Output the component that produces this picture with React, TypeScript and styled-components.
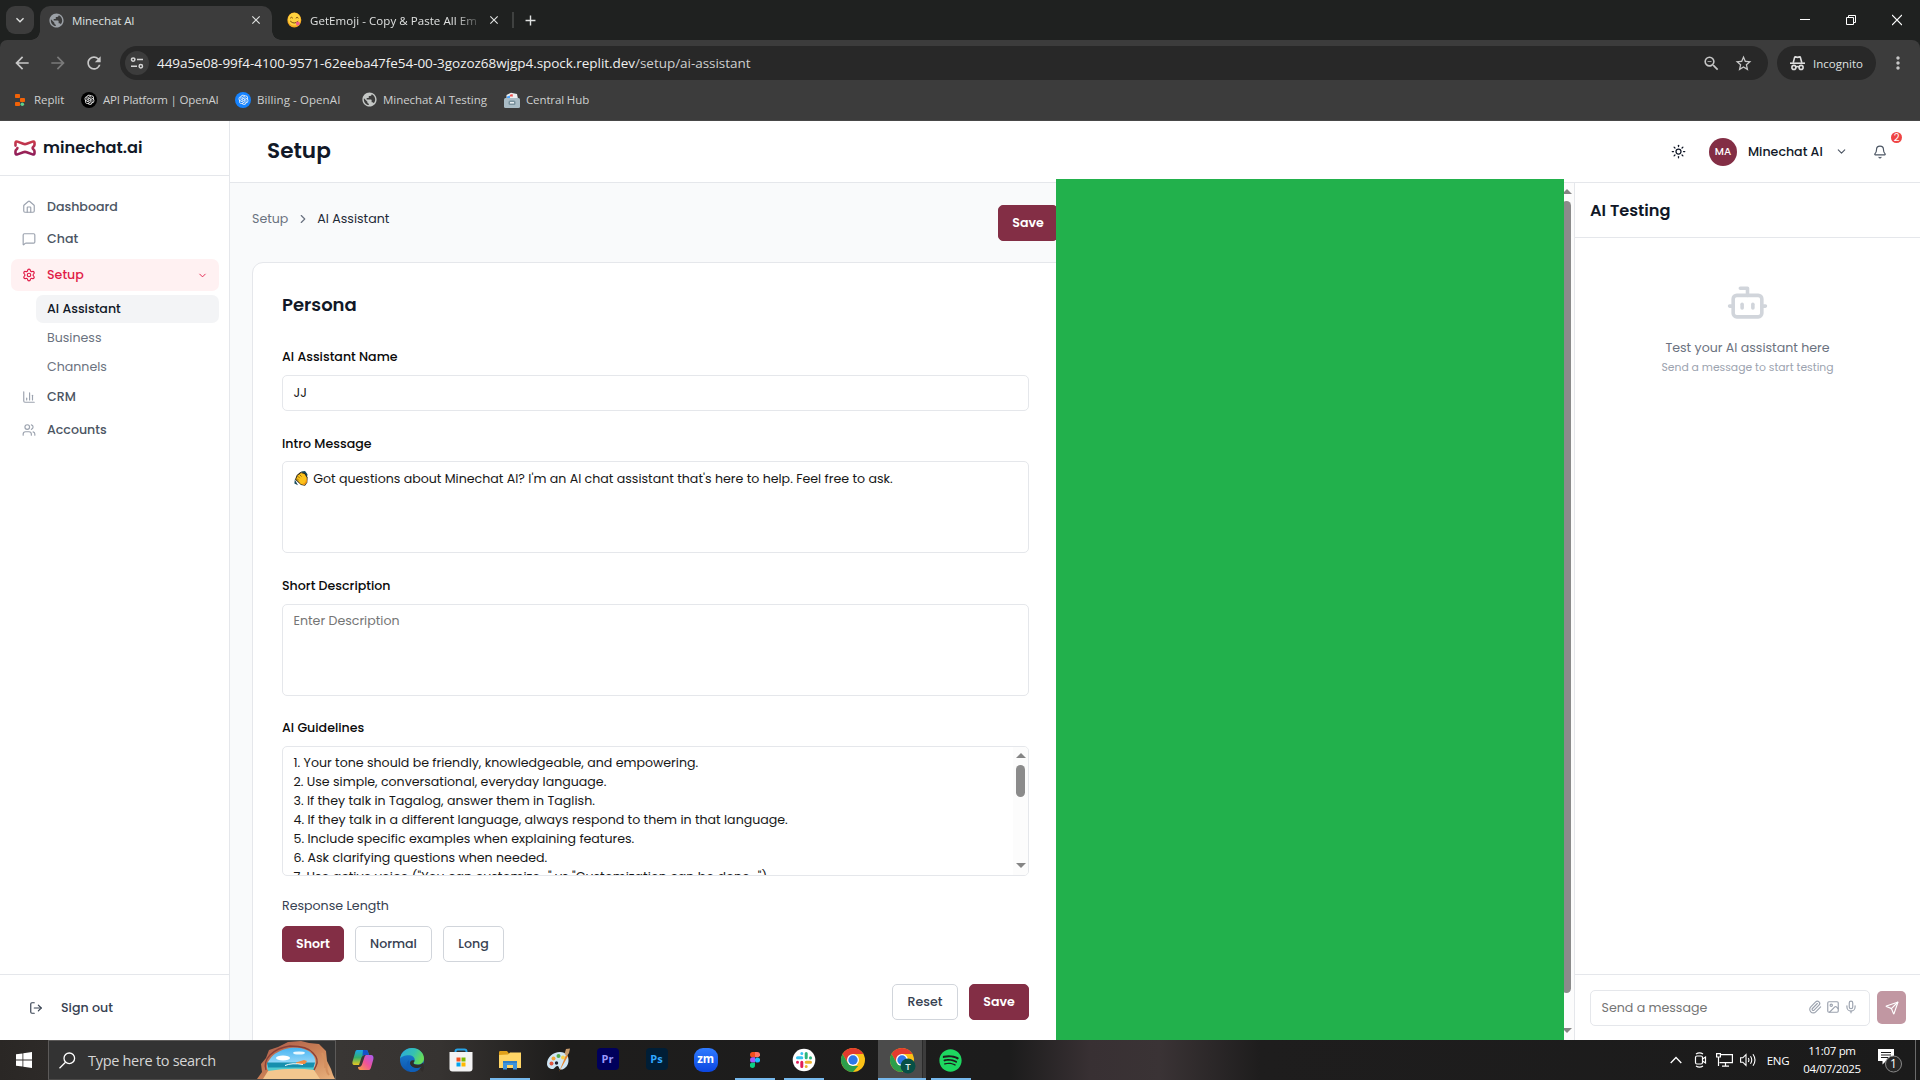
import React from 'react';
import styled, { createGlobalStyle } from 'styled-components';
import {
  Bell, Bot, ChartColumn, ChevronDown, ChevronRight, House, Image as ImageIcon, LogOut,
  MessageSquare, Mic, Paperclip, Send, Settings, Sun, Users,
} from 'lucide-react';
import {
  MdArrowBack, MdArrowForward, MdClose, MdExpandMore, MdMoreVert, MdPublic, MdRefresh,
  MdStarBorder, MdAdd, MdZoomOut,
} from 'react-icons/md';
import { AiOutlineOpenAI } from 'react-icons/ai';
import { FaSpotify } from 'react-icons/fa';

const APP_FONT = 'Poppins, Inter, "Liberation Sans", sans-serif';
const SYSTEM_FONT = '"Segoe UI", "Open Sans", "Noto Sans", sans-serif';
const WINE = '#832e45';
const LINE = '#e5e7eb';

const GlobalStyle = createGlobalStyle`
  *, *::before, *::after { box-sizing: border-box; }
  html, body { margin: 0; padding: 0; background: #1c1c1c; overflow: hidden; }
  svg { display: block; flex: none; }
  button { font: inherit; margin: 0; padding: 0; cursor: pointer; }
`;

const Screen = styled.div`
  width: 1920px;
  height: 1080px;
  display: flex;
  flex-direction: column;
  overflow: hidden;
`;

const Text = styled.span<{ $ls?: number }>`
  letter-spacing: ${(p) => p.$ls ?? 0}px;
  white-space: nowrap;
`;

/* ---------- browser chrome ---------- */

const Browser = styled.header`
  flex: none;
  height: 121px;
  background: #1f2120;
  font-family: ${SYSTEM_FONT};
  font-size: 11.5px;
  color: #dfe1e0;
  display: flex;
  flex-direction: column;
`;

const TabStrip = styled.div`
  height: 40px;
  display: flex;
  align-items: flex-start;
  padding: 6px 0 0 6px;
`;

const TabSearch = styled.div`
  width: 28px;
  height: 28px;
  border-radius: 9px;
  background: #3c3c3c;
  display: grid;
  place-items: center;
  margin-right: 6px;
`;

const Tab = styled.div<{ $active?: boolean; $width: number }>`
  position: relative;
  width: ${(p) => p.$width}px;
  height: ${(p) => (p.$active ? 34 : 28)}px;
  padding: ${(p) => (p.$active ? '0 9px 6px 8px' : '0 3px 0 15px')};
  display: flex;
  align-items: center;
  gap: ${(p) => (p.$active ? 7 : 8)}px;
  border-radius: 10px 10px 0 0;
  background: ${(p) => (p.$active ? '#3c3c3c' : 'transparent')};

  &::before, &::after {
    content: '';
    display: ${(p) => (p.$active ? 'block' : 'none')};
    position: absolute;
    bottom: 0;
    width: 9px;
    height: 9px;
  }
  &::before { left: -9px; background: radial-gradient(circle at 0 0, transparent 8.5px, #3c3c3c 9px); }
  &::after { right: -9px; background: radial-gradient(circle at 100% 0, transparent 8.5px, #3c3c3c 9px); }
`;

const TabTitle = styled.span<{ $ls: number; $fade?: boolean }>`
  flex: 1;
  overflow: hidden;
  white-space: nowrap;
  letter-spacing: ${(p) => p.$ls}px;
  mask-image: ${(p) => (p.$fade ? 'linear-gradient(to right, #000 86%, transparent 103%)' : 'none')};
`;

const TabDivider = styled.div`
  width: 2px;
  height: 16px;
  margin: 6px 8px 0 8px;
  background: #3f4140;
`;

const NewTab = styled.div`
  height: 28px;
  display: grid;
  place-items: center;
`;

const WindowControls = styled.div`
  margin: 3px 18px 0 auto;
  display: flex;
  gap: 36px;
`;

const Toolbar = styled.div`
  height: 46px;
  background: #3c3c3c;
  border-radius: 7px 8px 0 0;
  padding: 6px 12px 6px 12px;
  display: flex;
  align-items: center;
`;

const NavButtons = styled.div`
  width: 108px;
  display: flex;
  gap: 16px;
  color: #c8c8c8;
  & > :nth-child(2) { color: #7a7a7a; }
`;

const AddressBar = styled.div`
  width: 1648px;
  height: 34px;
  border-radius: 17px;
  background: #282828;
  display: flex;
  align-items: center;
  padding: 0 15px 0 5px;
`;

const SiteInfo = styled.div`
  width: 24px;
  height: 24px;
  border-radius: 50%;
  background: #3c3c3c;
  display: grid;
  place-items: center;
  margin-right: 8px;
`;

const Url = styled.span`
  flex: 1;
  font-size: 13.5px;
  letter-spacing: -0.04px;
  color: #f0f0f0;
  white-space: nowrap;
  & > span { color: #cfd0d0; }
`;

const AddressIcons = styled.div`
  display: flex;
  align-items: center;
  gap: 13px;
  color: #c7c7c7;
`;

const IncognitoPill = styled.div`
  width: 99px;
  height: 34px;
  margin-left: 9px;
  border-radius: 17px;
  background: #282828;
  display: flex;
  align-items: center;
  padding-left: 13px;
  gap: 8px;
`;

const MenuDots = styled.div`
  margin-left: 12px;
  color: #c7c7c7;
`;

const BookmarkBar = styled.div`
  flex: 1;
  background: #3c3c3c;
  border-bottom: 1px solid #484848;
  display: flex;
  align-items: center;
  padding: 0 0 7px 14px;
`;

const Bookmark = styled.div<{ $width: number; $gap?: number }>`
  width: ${(p) => p.$width}px;
  display: flex;
  align-items: center;
  gap: ${(p) => p.$gap ?? 6}px;
  color: #cfd0d0;
`;

const RoundMark = styled.div<{ $bg: string }>`
  width: 16px;
  height: 16px;
  border-radius: 50%;
  display: grid;
  place-items: center;
  background: ${(p) => p.$bg};
  color: #f4f4f4;
`;

/* ---------- application shell ---------- */

const AppShell = styled.div`
  height: 919px;
  flex: none;
  display: flex;
  background: #fff;
  font-family: ${APP_FONT};
  font-size: 12.6px;
  color: #111827;
`;

const Sidebar = styled.aside`
  width: 230px;
  flex: none;
  border-right: 1px solid ${LINE};
  display: flex;
  flex-direction: column;
`;

const Brand = styled.div`
  height: 55px;
  border-bottom: 1px solid ${LINE};
  padding: 0 0 0 14px;
  display: flex;
  align-items: center;
  gap: 7px;
  font-size: 16.2px;
  font-weight: 600;
  & > span { margin-bottom: 1px; }
`;

const Nav = styled.nav`
  flex: 1;
  padding: 15px 10px 0 11px;
  display: flex;
  flex-direction: column;
`;

const NavItem = styled.a<{ $active?: boolean; $height?: number }>`
  height: ${(p) => p.$height ?? 32}px;
  margin: ${(p) => (p.$active ? '4px 0' : '0')};
  padding: 0 11px 0 11px;
  display: flex;
  align-items: center;
  gap: 11px;
  border-radius: 7px;
  font-weight: 500;
  color: ${(p) => (p.$active ? '#e11d48' : '#4b5563')};
  background: ${(p) => (p.$active ? '#fff1f2' : 'transparent')};
  & > svg:first-child { color: ${(p) => (p.$active ? '#e11d48' : '#9ca3af')}; }
  & > span { flex: 1; }
`;

const SubItem = styled.a<{ $active?: boolean }>`
  height: 28px;
  margin: 0 0 1px 25px;
  padding-left: 11px;
  display: flex;
  align-items: center;
  border-radius: 7px;
  font-weight: ${(p) => (p.$active ? 500 : 400)};
  color: ${(p) => (p.$active ? '#111827' : '#6b7280')};
  background: ${(p) => (p.$active ? '#f3f4f6' : 'transparent')};
`;

const SignOut = styled.div`
  height: 66px;
  border-top: 1px solid ${LINE};
  padding-left: 29px;
  display: flex;
  align-items: center;
  gap: 18px;
  font-weight: 500;
  color: #374151;
`;

const Workspace = styled.div`
  position: relative;
  flex: 1;
  min-width: 0;
  display: flex;
  flex-direction: column;
`;

const TopBar = styled.div`
  height: 62px;
  border-bottom: 1px solid ${LINE};
  padding: 0 33px 0 37px;
  display: flex;
  align-items: center;
`;

const PageTitle = styled.h1`
  margin: 0 auto 3px 0;
  font-size: 21.6px;
  font-weight: 600;
`;

const Avatar = styled.div`
  width: 28px;
  height: 28px;
  margin: 0 11px 0 23px;
  border-radius: 50%;
  background: ${WINE};
  color: #fff;
  font-size: 10.4px;
  font-weight: 500;
  display: grid;
  place-items: center;
`;

const UserName = styled.span`
  font-weight: 500;
  width: 87px;
`;

const BellWrap = styled.div`
  position: relative;
  margin-left: 25px;
  color: #4b5563;
`;

const Badge = styled.span`
  position: absolute;
  left: 18px;
  top: -13px;
  width: 11px;
  height: 11px;
  border-radius: 50%;
  background: #ef4444;
  color: #fff;
  font-size: 10px;
  line-height: 11px;
  text-align: center;
`;

const Columns = styled.div`
  flex: 1;
  min-height: 0;
  display: flex;
`;

const Content = styled.main`
  width: 1329px;
  flex: none;
  background: #f9fafb;
  padding: 22px 22px 0 22px;
  display: flex;
  flex-direction: column;
  overflow: hidden;
`;

const CrumbRow = styled.div`
  height: 36px;
  margin-bottom: 21px;
  display: flex;
  align-items: flex-start;
`;

const Crumbs = styled.div`
  width: 746px;
  height: 28px;
  display: flex;
  align-items: center;
  color: #6b7280;
  & > svg { margin: 0 7px 0 8px; }
`;

const Current = styled.span`
  color: #1f2937;
`;

const Card = styled.section`
  flex: none;
  height: 860px;
  border: 1px solid ${LINE};
  border-radius: 11px;
  background: #fff;
  padding: 28px 29px 0;
`;

const Form = styled.div`
  width: 747px;
  display: flex;
  flex-direction: column;
`;

const CardTitle = styled.h2`
  margin: 0 0 28px;
  height: 28px;
  line-height: 28px;
  font-size: 18px;
  font-weight: 600;
`;

const Label = styled.label<{ $top?: number; $bottom?: number; $soft?: boolean }>`
  height: 19px;
  line-height: 19px;
  margin: ${(p) => p.$top ?? 0}px 0 ${(p) => p.$bottom ?? 8}px;
  font-weight: ${(p) => (p.$soft ? 400 : 500)};
  color: ${(p) => (p.$soft ? '#374151' : '#0a0a0a')};
`;

const Field = styled.div<{ $height: number; $pad: number }>`
  height: ${(p) => p.$height}px;
  padding: ${(p) => p.$pad}px 0 0 10.5px;
  border: 1px solid ${LINE};
  border-radius: 5px;
  background: #fff;
  display: flex;
  line-height: 19px;
  color: #171717;
  overflow: hidden;
`;

const Placeholder = styled.span`
  color: #757575;
`;

const IntroText = styled.span`
  margin-left: 4.7px;
  white-space: nowrap;
`;

const Lines = styled.div`
  flex: 1;
  display: flex;
  flex-direction: column;
`;

const FieldScroll = styled.div`
  width: 15px;
  height: 128px;
  margin-top: -6px;
  background: #fcfcfc;
  padding: 6px 0 7px;
  display: flex;
  flex-direction: column;
  align-items: center;
`;

const Arrow = styled.div<{ $down?: boolean }>`
  flex: none;
  width: 0;
  height: 0;
  border: 5px solid transparent;
  border-top: ${(p) => (p.$down ? '5px solid #858585' : '0')};
  border-bottom: ${(p) => (p.$down ? '0' : '5px solid #858585')};
`;

const Thumb = styled.div<{ $height: number }>`
  flex: none;
  width: 9px;
  height: ${(p) => p.$height}px;
  margin: 7px 0 auto;
  border-radius: 5px;
  background: #8b8b8b;
`;

const ButtonRow = styled.div<{ $top: number; $end?: boolean }>`
  margin-top: ${(p) => p.$top}px;
  display: flex;
  gap: 11px;
  justify-content: ${(p) => (p.$end ? 'flex-end' : 'flex-start')};
`;

const Button = styled.button<{ $width: number; $primary?: boolean }>`
  width: ${(p) => p.$width}px;
  height: 36px;
  border-radius: 5px;
  border: 1px solid ${(p) => (p.$primary ? WINE : '#d1d5db')};
  background: ${(p) => (p.$primary ? WINE : '#fff')};
  color: ${(p) => (p.$primary ? '#fff' : '#374151')};
  font-weight: ${(p) => (p.$primary ? 600 : 500)};
`;

const PageScroll = styled.div`
  width: 15px;
  flex: none;
  background: #fcfcfc;
  padding: 6px 0 7px;
  display: flex;
  flex-direction: column;
  align-items: center;
`;

const GreenBlock = styled.div`
  position: absolute;
  left: 826px;
  top: 58px;
  width: 508px;
  bottom: 0;
  background: #22b14c;
`;

const TestPanel = styled.aside`
  flex: 1;
  border-left: 1px solid ${LINE};
  display: flex;
  flex-direction: column;
`;

const PanelTitle = styled.h3`
  margin: 0;
  height: 55px;
  border-bottom: 1px solid ${LINE};
  padding-left: 15px;
  line-height: 56px;
  font-size: 16.2px;
  font-weight: 600;
`;

const EmptyState = styled.div`
  flex: 1;
  padding-top: 43px;
  display: flex;
  flex-direction: column;
  align-items: center;
  color: #6b7280;
  & > svg { color: #d1d5db; margin-bottom: 14px; }
  & > p { margin: 0; line-height: 20px; }
  & > small { margin-top: 1px; line-height: 18px; font-size: 10.8px; color: #9ca3af; }
`;

const Composer = styled.div`
  height: 66px;
  border-top: 1px solid ${LINE};
  padding: 15px 14px 0 15px;
  display: flex;
  gap: 7px;
`;

const ComposerInput = styled.div`
  width: 280px;
  height: 36px;
  border: 1px solid ${LINE};
  border-radius: 5px;
  padding: 0 11px 0 10.5px;
  display: flex;
  align-items: center;
  color: #9ca3af;
  & > span { flex: 1; }
  & > svg { margin: 0 0 2px 4px; }
`;

const SendButton = styled.button`
  width: 29px;
  height: 33px;
  margin-top: 1px;
  border: 0;
  border-radius: 5px;
  background: #c197a2;
  color: #fff;
  display: grid;
  place-items: center;
`;

/* ---------- taskbar ---------- */

const Taskbar = styled.footer`
  height: 40px;
  flex: none;
  background: linear-gradient(to right, #2a2725 0, #2d2a28 48px, #393634 340px, #363331 440px, #1e1d1c 560px,
    #1c1c1c 1010px, #383033 1090px, #3a3335 1160px, #1e1d1d 1260px, #1b1b1b 100%);
  display: flex;
  font-family: ${SYSTEM_FONT};
  color: #fff;
`;

const StartButton = styled.div`
  width: 48px;
  display: grid;
  place-items: center;
`;

const SearchBox = styled.div`
  width: 288px;
  margin-right: 2px;
  border: 1px solid #5c5a59;
  border-bottom-color: #4a4948;
  background: #333;
  display: flex;
  align-items: center;
  padding-left: 10px;
  gap: 12px;
  font-size: 14.5px;
  letter-spacing: -0.3px;
  color: #d6d6d6;
  & > svg:last-child { margin-left: auto; }
`;

const AppSlot = styled.div<{ $open?: boolean; $focus?: boolean }>`
  width: 49px;
  position: relative;
  display: grid;
  place-items: center;
  background: ${(p) => (p.$focus ? 'linear-gradient(to right, transparent 0, transparent 1px, #4b4b4b 1px, #4b4b4b 45px, #2a2a2a 45px, #2a2a2a 46px, #3c3c3c 46px)' : 'none')};
  &::after {
    content: '';
    display: ${(p) => (p.$open || p.$focus ? 'block' : 'none')};
    position: absolute;
    left: ${(p) => (p.$focus ? 1 : 5)}px;
    right: ${(p) => (p.$focus ? 0 : 4)}px;
    bottom: 0;
    height: 2px;
    background: #76b9ed;
  }
`;

const Tile = styled.div<{ $bg: string; $fg: string }>`
  width: 22px;
  height: 22px;
  margin-bottom: 2px;
  border-radius: 4px;
  background: ${(p) => p.$bg};
  color: ${(p) => p.$fg};
  font: 700 11px/21px ${SYSTEM_FONT};
  text-align: center;
`;

const ZoomTile = styled.div`
  width: 24px;
  height: 24px;
  border-radius: 9px;
  background: linear-gradient(#2f7bff, #0b46e0);
  font: 700 11.5px/22px ${SYSTEM_FONT};
  text-align: center;
  letter-spacing: -0.2px;
`;

const Tray = styled.div`
  margin-left: auto;
  display: flex;
  align-items: center;
  font-size: 11.5px;
`;

const TrayIcon = styled.div<{ $width: number }>`
  width: ${(p) => p.$width}px;
  display: grid;
  place-items: center;
`;

const Clock = styled.div`
  width: 58px;
  margin-left: 8px;
  text-align: center;
  line-height: 18px;
  letter-spacing: -0.34px;
  padding-bottom: 1px;
  white-space: nowrap;
`;

const Notice = styled.div`
  width: 55px;
  height: 40px;
  padding: 2px 0 0 5px;
  border-right: 1px solid #6b6b6b;
  margin-right: 4px;
  display: grid;
  place-items: center;
`;

/* ---------- drawings ---------- */

const TuneIcon = () => (
  <svg width="14" height="14" viewBox="0 0 14 14" fill="none" stroke="#d5d5d5" strokeWidth="1.5">
    <circle cx="3.2" cy="3.6" r="1.7" /><path d="M7 3.6h6M1 10.2h6" /><circle cx="10.8" cy="10.2" r="1.7" />
  </svg>
);

const IncognitoIcon = () => (
  <svg width="15" height="15" viewBox="0 0 15 15" fill="none" stroke="#dedede" strokeWidth="1.6">
    <path d="M0 7.2h15" /><path d="M3.2 6.8 4.6 1.4c.1-.4.4-.6.8-.5l2.1.5 2.1-.5c.4-.1.7.1.8.5l1.4 5.4" />
    <circle cx="3.9" cy="11.4" r="2" /><circle cx="11.1" cy="11.4" r="2" /><path d="M5.9 11c1-.6 2.2-.6 3.2 0" />
  </svg>
);

const MinimizeIcon = () => <svg width="10" height="22"><path d="M0 10.5h10" stroke="#fff" /></svg>;
const RestoreIcon = () => (
  <svg width="10" height="22" fill="none" stroke="#fff"><path d="M.5 8.5h7v7h-7zM2.5 8.5v-2h7v7h-2" /></svg>
);
const CloseIcon = () => <svg width="10" height="22" stroke="#fff" strokeWidth="1.2"><path d="M0 6l10 10M10 6 0 16" /></svg>;

const YumEmoji = () => (
  <svg width="15" height="16" viewBox="0 0 15 16">
    <ellipse cx="7.3" cy="8" rx="7" ry="7.6" fill="#f6a821" /><ellipse cx="7.3" cy="7.2" rx="6.2" ry="6.4" fill="#ffd23e" />
    <path d="M3.2 6.2q1.3-1.8 2.6 0M8.8 6.2q1.3-1.8 2.6 0M3.2 9q4 4 8 0" stroke="#7a4a14" strokeWidth="1" fill="none" />
    <ellipse cx="10.8" cy="11.6" rx="1.9" ry="2" fill="#ef5f8a" />
  </svg>
);

const ReplitIcon = () => (
  <svg width="11" height="12" viewBox="0 0 11 12">
    <rect x="1" y="0" width="5" height="4" rx=".8" fill="#f26207" /><rect x="6" y="4" width="5" height="4" rx=".8" fill="#f26207" />
    <rect x="1" y="8" width="5" height="4" rx=".8" fill="#f26207" /><circle cx="8.3" cy="10.2" r="1.8" fill="#5fd08a" />
  </svg>
);

const HubIcon = () => (
  <svg width="16" height="16" viewBox="0 0 16 16">
    <path d="M2.5 7V3L7 .8l6 1.2 1 5z" fill="#eceff1" /><path d="M3 4.5l3-1v2.500H3z" fill="#4aa3ff" /><path d="M6 2.8 8.5 2l.5 2.500H6z" fill="#ef5350" />
    <rect x="0" y="6" width="16" height="10" rx="1.5" fill="#a9bcc6" /><rect x="4.5" y="8.5" width="7" height="4.5" rx="1.5" fill="#78909c" /><rect x="6" y="10" width="4" height="1.5" fill="#e8eef1" />
  </svg>
);

const BrandIcon = () => (
  <svg width="22" height="16" viewBox="0 0 22 16" fill="none">
    <defs><linearGradient id="brand" x1="0" y1="0" x2="0" y2="1"><stop offset="0" stopColor="#c9394b" /><stop offset="1" stopColor="#8f1d59" /></linearGradient></defs>
    <path d="M1.5 5.6V2.8C1.5 1.7 2.3 1.2 3.4 1.6L9.3 3.8c1.100.4 2.300.4 3.400 0l5.900-2.200c1.100-.4 1.900.1 1.900 1.200V4.800c0 1.700-1.900 1.600-1.900 3.200s1.900 1.500 1.900 3.200v2c0 1.100-.8 1.600-1.900 1.200l-5.900-2.200c-1.100-.4-2.300-.4-3.400 0l-5.900 2.200c-1.100.4-1.900-.1-1.900-1.200v-2c0-1.700 1.900-1.600 1.900-3.200" stroke="url(#brand)" strokeWidth="2.6" strokeLinecap="round" strokeLinejoin="round" />
  </svg>
);

const HandEmoji = () => (
  <svg width="15" height="19" viewBox="0 0 15 19">
    <path d="M7 2.5 11 2l2.500 3.200-.5 3zM.8 10.500l-.4 4 3.600 1.700z" fill="#17495c" />
    <path d="M1 10.500 2.800 6 6.500 3l4.500 1.200 2.600 4.300-.3 5L11 16.800 7 16z" fill="#2b2417" />
    <path d="M2 10 4 6.300 7 4l3.500 1 2.300 3.800-.2 4.500-2 2.600L7 15.200z" fill="#fcc21b" />
    <path d="M3.800 7.200l2 2M5.600 5.600l2 2M2.800 9.400l2 2" stroke="#6b4e0a" strokeWidth=".7" />
    <path d="M9 15.400c2-.5 3.400-2.200 3.600-4.900" stroke="#f08f12" strokeWidth="1.2" fill="none" />
  </svg>
);

const WindowsLogo = () => (
  <svg width="16" height="16" viewBox="0 0 16 16" fill="#fff"><path d="M0 2.300 6.500 1.400v6.200H0zM7.300 1.300 16 0v7.600H7.300zM0 8.400h6.500v6.200L0 13.700zM7.300 8.400H16V16l-8.700-1.300z" /></svg>
);

const MagnifierIcon = () => (
  <svg width="17" height="17" viewBox="0 0 17 17" fill="none" stroke="#fff" strokeWidth="1.3"><circle cx="10.3" cy="6.3" r="5.3" /><path d="M6.500 10.200.5 16.300" /></svg>
);

const SeaArch = () => (
  <svg width="78" height="38" viewBox="0 0 78 38">
    <defs>
      <linearGradient id="rock" x1="0" y1="0" x2="1" y2="1"><stop offset="0" stopColor="#a8574a" /><stop offset=".5" stopColor="#c97f55" /><stop offset="1" stopColor="#eab27d" /></linearGradient>
      <linearGradient id="sky" x1="0" y1="0" x2="0" y2="1"><stop offset="0" stopColor="#49b4f2" /><stop offset="1" stopColor="#b5e7fb" /></linearGradient>
    </defs>
    <path d="M0 38 5 31 4 23 9 17l3-8 9-3L31 1l13-1 8 2 10 1 7 7 1 10 4 8 2 6 2 4z" fill="url(#rock)" />
    <path d="M11 29c-2-4-1-7 2-11 3-5 10-9 20-11 10-1 17 1 21 5 4 3 5 8 4 12l-2 5z" fill="url(#sky)" />
    <path d="M10 21.500h48l-2 7H11z" fill="#168fae" /><path d="M10 26.500h47l1 3-4 2H12z" fill="#4fcbd0" />
    <path d="M11 30q24-4 46-1l6 9H6z" fill="#f3c78f" />
    <ellipse cx="26" cy="17" rx="7" ry="2.5" fill="#fff" /><ellipse cx="42" cy="12" rx="6" ry="1.6" fill="#e8f8ff" />
    <path d="M39 21.500l8-2.500 3 1-2 3h-9z" fill="#ef8d45" /><path d="M28 24.500q7-3 18-1" stroke="#fff" fill="none" />
    <path d="M9 29c-2-5 0-11 4-15 5-5 12-8 20-9 11 0 19 2 23 7 4 4 5 9 3 13l-2 4" stroke="#8b4038" strokeWidth="1.4" fill="none" />
    <path d="M65 12q4 8 3 15M70 22q-2 7 2 12" stroke="#d4905f" strokeWidth="2" fill="none" />
  </svg>
);

const CopilotIcon = () => (
  <svg width="24" height="24" viewBox="0 0 24 24">
    <defs>
      <linearGradient id="cpa" x1="0" y1="0" x2="0" y2="1"><stop offset="0" stopColor="#1aa6ee" /><stop offset=".5" stopColor="#35b06b" /><stop offset="1" stopColor="#e9c720" /></linearGradient>
      <linearGradient id="cpb" x1="1" y1="0" x2="0" y2="1"><stop offset="0" stopColor="#a45cf5" /><stop offset=".5" stopColor="#f0529a" /><stop offset="1" stopColor="#f9a03f" /></linearGradient>
    </defs>
    <path d="M6 2h9c2 0 2 2 3 5h-4c-2 0-3 1-4 4l-2 6H4c-3 0-3-2-2-5l2-7c.4-1.800 1-3 2-3z" fill="url(#cpa)" />
    <path d="M12 2h3c2 0 2 2 3 5h-4c-1 0-2 .4-2.600 1.500z" fill="#1552c9" />
    <path d="M18 22H9c-1 0-2-1-2-3 3 0 3.500-1 4.500-4l2-6c.5-1.500 1-2 2.500-2h4c2 0 3 2 2.300 4.500l-2 7C19.800 20.500 19 22 18 22z" fill="url(#cpb)" />
  </svg>
);

const EdgeIcon = () => (
  <svg width="24" height="24" viewBox="0 0 24 24">
    <defs>
      <linearGradient id="ea" x1="0" y1="0" x2="1" y2=".4"><stop offset="0" stopColor="#2aa8e0" /><stop offset=".6" stopColor="#35c1b1" /><stop offset="1" stopColor="#66dc5a" /></linearGradient>
      <linearGradient id="eb" x1="0" y1="0" x2="0" y2="1"><stop offset="0" stopColor="#1b84d6" /><stop offset="1" stopColor="#0e55ad" /></linearGradient>
    </defs>
    <circle cx="12" cy="12" r="12" fill="url(#eb)" />
    <path d="M.1 10.500C1 4.500 6 0 12 0c7 0 12 5 12 10.500 0 4-3 6-6.500 6-3 0-4-1-4-1.800 0-.7 1.200-1.200 1.200-3 0-2.500-2.500-4.500-6-4.500-4 0-7.500 1.500-8.600 3.300z" fill="url(#ea)" />
    <path d="M14.500 12.500c0 1.500-1 1.900-1 2.600 0 .9 1.500 1.700 4 1.700 2.500 0 4.500-.8 5.600-2.300L24 20l-1.500 4-3-3.500c-5 1.500-9-2-9.500-5-.2-2 1.500-4 4.500-3z" fill="#302d2b" />
    <path d="M9 12c-.5 4 2.500 8 7 8 2 0 4-.6 5.500-1.600C19 22 15 24.500 10.500 23.900 6 21 5.500 14.500 9 12z" fill="#0f5fb8" />
  </svg>
);

const StoreIcon = () => (
  <svg width="24" height="24" viewBox="0 0 24 24">
    <path d="M6.500 5V3.500C6.500 2.200 7.200 1.500 8.500 1.500h7c1.300 0 2 .7 2 2V5" stroke="#27a4e8" strokeWidth="2" fill="none" />
    <path d="M.5 4h23v16.500c0 1.900-1 3-3 3h-17c-2 0-3-1.100-3-3z" fill="#f3f3f3" />
    <path d="M7.500 9.500h4v4h-4z" fill="#f25022" /><path d="M12.500 9.500h4v4h-4z" fill="#7fba00" /><path d="M7.500 14.500h4v4h-4z" fill="#00a4ef" /><path d="M12.500 14.500h4v4h-4z" fill="#ffb900" />
  </svg>
);

const FolderIcon = () => (
  <svg width="22" height="19" viewBox="0 0 22 19">
    <path d="M0 1.500C0 .7.500 0 1.300 0H8l2 2.500v3H0z" fill="#e0a019" /><path d="M0 4l9-.5 2-2h11V17H0z" fill="#ffd566" />
    <path d="M4 18.500V10h14v8.500h-4V14H8v4.500z" fill="#3c93dc" /><path d="M4 10h14v2H4z" fill="#2f7fc6" />
  </svg>
);

const PaintIcon = () => (
  <svg width="25" height="25" viewBox="0 0 25 25">
    <path d="M1 16C1 9 7 4 14 4c6 0 9 4 8.500 9-.5 6-5 9-8 8.500-2-.4-1-3-3-3.500s-2.500 3-5 3S1 19 1 16z" fill="#cfe6f5" />
    <circle cx="5.5" cy="15.5" r="2" fill="#e0533d" /><circle cx="7.5" cy="10.5" r="2" fill="#f0a43a" /><circle cx="12.5" cy="8" r="2" fill="#53ab4d" /><circle cx="17" cy="9.5" r="2" fill="#f6d14b" /><circle cx="10.5" cy="15" r="1.7" fill="#223" />
    <path d="M13 24 20 7l2 1z" fill="#e8842a" /><path d="M18.500 6 20 1l4-.5L23 5l-2 3z" fill="#c79a6b" />
  </svg>
);

const FigmaIcon = () => (
  <svg width="10" height="16" viewBox="0 0 10 16">
    <path d="M2.700 0H5v5.300H2.700a2.650 2.650 0 0 1 0-5.300z" fill="#f24e1e" /><path d="M5 0h2.400a2.650 2.650 0 0 1 0 5.300H5z" fill="#ff7262" />
    <path d="M2.700 5.300H5v5.300H2.700a2.650 2.650 0 0 1 0-5.300z" fill="#a259ff" /><circle cx="7.5" cy="8" r="2.6" fill="#1abcfe" />
    <path d="M2.700 10.700H5v2.600a2.600 2.600 0 1 1-2.300-2.600z" fill="#0acf83" />
  </svg>
);

const SlackIcon = () => (
  <svg width="24" height="24" viewBox="0 0 24 24" strokeWidth="3" strokeLinecap="round">
    <circle cx="12" cy="12" r="11.3" fill="#fff" />
    <path d="M9.800 5.500v.1M5.500 9.800h4.300" stroke="#36c5f0" /><path d="M14.200 5.500v4.300M18.500 9.800v.1" stroke="#2eb67d" />
    <path d="M14.200 14.200h4.300M14.200 18.500v.1" stroke="#ecb22e" /><path d="M9.800 14.200v4.300M5.500 14.200v.1" stroke="#e01e5a" />
  </svg>
);

const ChromeIcon = ({ profile }: { profile?: boolean }) => (
  <svg width="24" height="24" viewBox="0 1 24 24" overflow="visible">
    <circle cx="12" cy="13" r="12" fill="#fbc116" />
    <path d="M1.600 7A12 12 0 0 1 22.400 7H12L6.800 16z" fill="#e33b2e" />
    <path d="M1.600 7 6.800 16 12 19h5.200L12 25A12 12 0 0 1 1.600 7z" fill="#2c9e4b" />
    <circle cx="12" cy="13" r="6" fill="#fff" /><circle cx="12" cy="13" r="4.7" fill="#2f77e8" />
    {profile && (
      <>
        <circle cx="18" cy="19" r="7.5" fill="#075046" />
        <text x="18" y="22.5" fontSize="9.5" fontWeight="600" fill="#dfeeea" textAnchor="middle" fontFamily="Open Sans, sans-serif">T</text>
      </>
    )}
  </svg>
);

const ChevronUpTray = () => <svg width="12" height="8" fill="none" stroke="#fff" strokeWidth="1.3"><path d="M.7 7 6 1.500 11.300 7" /></svg>;
const MeetIcon = () => (
  <svg width="13" height="16" viewBox="0 0 13 16" fill="none" stroke="#fff" strokeWidth="1.2">
    <rect x="1.5" y="4" width="7" height="8" rx="1.5" /><path d="M8.500 7 11.500 5v6l-3-2M2 2q3.500-2.200 7 0M2 14q3.500 2.200 7 0" />
  </svg>
);
const NetworkIcon = () => (
  <svg width="17" height="14" viewBox="0 0 17 14" fill="none" stroke="#fff" strokeWidth="1.2">
    <path d="M5 1.600h11.400v8H3.500M9.500 9.600v3.200M6 13.200h7" /><path d="M.6.600H4.400V4H.6zM2.500 4v9" />
  </svg>
);
const SpeakerIcon = () => (
  <svg width="17" height="14" viewBox="0 0 17 14" fill="none" stroke="#fff" strokeWidth="1.1">
    <path d="M.6 4.800h2.200L6 1.600v10.800L2.800 9.200H.6zM8.300 5q1.200 2 0 4M10.500 3.200q2.500 3.800 0 7.600M13 1.300q4 5.700 0 11.400" />
  </svg>
);
const NoticeIcon = () => (
  <svg width="25" height="25" viewBox="0 0 25 25">
    <path d="M0 0h16v12H8l-3.500 3.500V12H0z" fill="#fff" /><path d="M3 3.500h10M3 6h10M3 8.500h7" stroke="#1b1b1b" strokeWidth="1.2" />
    <circle cx="15.5" cy="15" r="8" fill="#262626" stroke="#8a8a8a" />
    <text x="15.5" y="19.2" fontSize="12" fill="#fff" textAnchor="middle" fontFamily="Open Sans, sans-serif">1</text>
  </svg>
);

/* ---------- data ---------- */

const guidelines = [
  '1. Your tone should be friendly, knowledgeable, and empowering.',
  '2. Use simple, conversational, everyday language.',
  '3. If they talk in Tagalog, answer them in Taglish.',
  '4. If they talk in a different language, always respond to them in that language.',
  '5. Include specific examples when explaining features.',
  '6. Ask clarifying questions when needed.',
  '7. Use active voice ("You can customize..." vs "Customization can be done...")',
];

/* ---------- sections ---------- */

const BrowserChrome = () => (
  <Browser>
    <TabStrip>
      <TabSearch><MdExpandMore size={16} /></TabSearch>
      <Tab $active $width={232}>
        <MdPublic size={17} color="#9ba0a6" />
        <TabTitle $ls={-0.07}>Minechat AI</TabTitle>
        <MdClose size={14} />
      </Tab>
      <Tab $width={232}>
        <YumEmoji />
        <TabTitle $ls={0.06} $fade>GetEmoji - Copy &amp; Paste All Em</TabTitle>
        <MdClose size={14} />
      </Tab>
      <TabDivider />
      <NewTab><MdAdd size={17} /></NewTab>
      <WindowControls><MinimizeIcon /><RestoreIcon /><CloseIcon /></WindowControls>
    </TabStrip>
    <Toolbar>
      <NavButtons><MdArrowBack size={20} /><MdArrowForward size={20} /><MdRefresh size={20} /></NavButtons>
      <AddressBar>
        <SiteInfo><TuneIcon /></SiteInfo>
        <Url>449a5e08-99f4-4100-9571-62eeba47fe54-00-3gozoz68wjgp4.spock.replit.dev<span>/setup/ai-assistant</span></Url>
        <AddressIcons><MdZoomOut size={19} /><MdStarBorder size={19} /></AddressIcons>
      </AddressBar>
      <IncognitoPill><IncognitoIcon /><Text>Incognito</Text></IncognitoPill>
      <MenuDots><MdMoreVert size={20} /></MenuDots>
    </Toolbar>
    <BookmarkBar>
      <Bookmark $width={67} $gap={9}><ReplitIcon /><Text $ls={-0.05}>Replit</Text></Bookmark>
      <Bookmark $width={154}><RoundMark $bg="#000"><AiOutlineOpenAI size={13} /></RoundMark><Text $ls={-0.17}>API Platform | OpenAI</Text></Bookmark>
      <Bookmark $width={126}><RoundMark $bg="#1683ff"><AiOutlineOpenAI size={13} /></RoundMark><Text $ls={0.09}>Billing - OpenAI</Text></Bookmark>
      <Bookmark $width={143} $gap={5}><MdPublic size={17} color="#c4c7c5" /><Text $ls={-0.05}>Minechat AI Testing</Text></Bookmark>
      <Bookmark $width={120}><HubIcon /><Text $ls={-0.12}>Central Hub</Text></Bookmark>
    </BookmarkBar>
  </Browser>
);

const AppSidebar = () => (
  <Sidebar>
    <Brand><BrandIcon /><span>minechat.ai</span></Brand>
    <Nav>
      <NavItem><House size={14} /><span>Dashboard</span></NavItem>
      <NavItem><MessageSquare size={14} /><span>Chat</span></NavItem>
      <NavItem $active><Settings size={14} /><span>Setup</span><ChevronDown size={11} /></NavItem>
      <SubItem $active>AI Assistant</SubItem>
      <SubItem>Business</SubItem>
      <SubItem>Channels</SubItem>
      <NavItem $height={30}><ChartColumn size={14} /><span>CRM</span></NavItem>
      <NavItem $height={35}><Users size={14} /><span>Accounts</span></NavItem>
    </Nav>
    <SignOut><LogOut size={14} />Sign out</SignOut>
  </Sidebar>
);

const PersonaForm = () => (
  <Card>
    <Form>
      <CardTitle>Persona</CardTitle>
      <Label $bottom={9}>AI Assistant Name</Label>
      <Field $height={36} $pad={7}>JJ</Field>
      <Label $top={23}>Intro Message</Label>
      <Field $height={92} $pad={7}>
        <HandEmoji />
        <IntroText>Got questions about Minechat AI? I'm an AI chat assistant that's here to help. Feel free to ask.</IntroText>
      </Field>
      <Label $top={23} $bottom={9}>Short Description</Label>
      <Field $height={92} $pad={6}><Placeholder>Enter Description</Placeholder></Field>
      <Label $top={22} $bottom={9}>AI Guidelines</Label>
      <Field $height={130} $pad={6}>
        <Lines>{guidelines.map((line) => <Text key={line}>{line}</Text>)}</Lines>
        <FieldScroll><Arrow /><Thumb $height={32} /><Arrow $down /></FieldScroll>
      </Field>
      <Label $soft $top={20} $bottom={0}>Response Length</Label>
      <ButtonRow $top={11}>
        <Button $primary $width={62}>Short</Button>
        <Button $width={77}>Normal</Button>
        <Button $width={61}>Long</Button>
      </ButtonRow>
      <ButtonRow $top={22} $end>
        <Button $width={66}>Reset</Button>
        <Button $primary $width={60}>Save</Button>
      </ButtonRow>
    </Form>
  </Card>
);

const TestingPanel = () => (
  <TestPanel>
    <PanelTitle>AI Testing</PanelTitle>
    <EmptyState>
      <Bot size={43} />
      <p>Test your AI assistant here</p>
      <small>Send a message to start testing</small>
    </EmptyState>
    <Composer>
      <ComposerInput>
        <Placeholder>Send a message</Placeholder>
        <Paperclip size={14} /><ImageIcon size={14} /><Mic size={14} />
      </ComposerInput>
      <SendButton><Send size={14} /></SendButton>
    </Composer>
  </TestPanel>
);

const WindowsTaskbar = () => (
  <Taskbar>
    <StartButton><WindowsLogo /></StartButton>
    <SearchBox><MagnifierIcon />Type here to search<SeaArch /></SearchBox>
    <AppSlot><CopilotIcon /></AppSlot>
    <AppSlot><EdgeIcon /></AppSlot>
    <AppSlot><StoreIcon /></AppSlot>
    <AppSlot $open><FolderIcon /></AppSlot>
    <AppSlot><PaintIcon /></AppSlot>
    <AppSlot><Tile $bg="#00005b" $fg="#9999ff">Pr</Tile></AppSlot>
    <AppSlot><Tile $bg="#001e36" $fg="#31a8ff">Ps</Tile></AppSlot>
    <AppSlot><ZoomTile>zm</ZoomTile></AppSlot>
    <AppSlot $open><FigmaIcon /></AppSlot>
    <AppSlot $open><SlackIcon /></AppSlot>
    <AppSlot><ChromeIcon /></AppSlot>
    <AppSlot $focus><ChromeIcon profile /></AppSlot>
    <AppSlot $open><FaSpotify size={23} color="#1ed760" /></AppSlot>
    <Tray>
      <TrayIcon $width={22}><ChevronUpTray /></TrayIcon>
      <TrayIcon $width={26}><MeetIcon /></TrayIcon>
      <TrayIcon $width={22}><NetworkIcon /></TrayIcon>
      <TrayIcon $width={26}><SpeakerIcon /></TrayIcon>
      <TrayIcon $width={34}><Text $ls={-0.35}>ENG</Text></TrayIcon>
      <Clock>11:07 pm<br />04/07/2025</Clock>
      <Notice><NoticeIcon /></Notice>
    </Tray>
  </Taskbar>
);

export default function App() {
  return (
    <Screen>
      <GlobalStyle />
      <BrowserChrome />
      <AppShell>
        <AppSidebar />
        <Workspace>
          <TopBar>
            <PageTitle>Setup</PageTitle>
            <Sun size={15} color="#111827" />
            <Avatar>MA</Avatar>
            <UserName>Minechat AI</UserName>
            <ChevronDown size={13} color="#4b5563" />
            <BellWrap><Bell size={14} /><Badge>2</Badge></BellWrap>
          </TopBar>
          <Columns>
            <Content>
              <CrumbRow>
                <Crumbs>Setup<ChevronRight size={14} /><Current>AI Assistant</Current></Crumbs>
                <Button $primary $width={60}>Save</Button>
              </CrumbRow>
              <PersonaForm />
            </Content>
            <PageScroll><Arrow /><Thumb $height={792} /><Arrow $down /></PageScroll>
            <TestingPanel />
          </Columns>
          <GreenBlock />
        </Workspace>
      </AppShell>
      <WindowsTaskbar />
    </Screen>
  );
}
